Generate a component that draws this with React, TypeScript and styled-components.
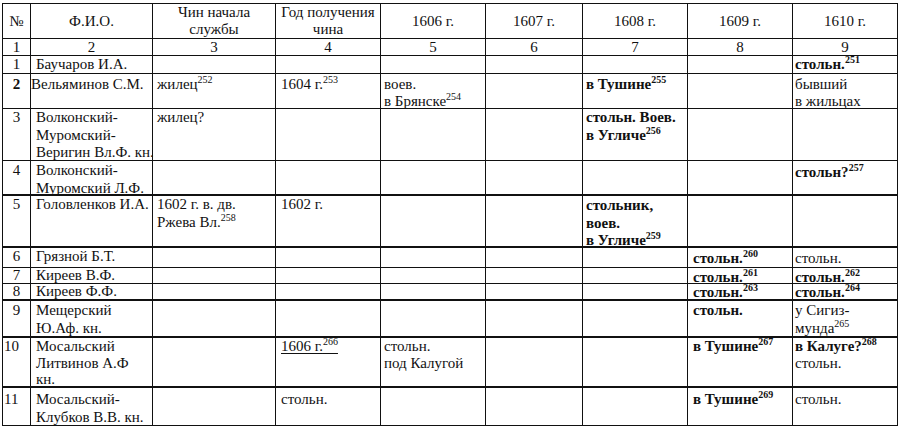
import React from 'react';
import styled, { createGlobalStyle } from 'styled-components';

const Global = createGlobalStyle`
  html, body { margin: 0; padding: 0; background: #fff; }
  body { font-family: 'Liberation Serif', 'Times New Roman', Times, serif; color: #000; }
`;

const COLS = [28, 122, 123, 105, 105, 97, 105, 105, 105];
const PL = [0, 5, 4, 5, 3, 3, 3, 5, 2];

type Spec = { t: React.ReactNode; b?: boolean; u?: boolean; dy?: number; pl?: number; align?: 'left' | 'center' };
type CellSpec = React.ReactNode | Spec;

type RowSpec = { h: number; pt: number; lh?: number; thick?: boolean; head?: boolean; center?: boolean; cells: CellSpec[] };

const Table = styled.div<{ $cols: string; $rows: string }>`
  display: grid;
  grid-template-columns: ${(p) => p.$cols};
  grid-template-rows: ${(p) => p.$rows};
  width: max-content;
  margin: 3px 0 0 2px;
  border-top: 1px solid #111;
  border-left: 1px solid #111;
  font-family: 'Liberation Serif', 'Times New Roman', Times, serif;
  color: #111;
`;

const Cell = styled.div<{ $pl: number; $thick?: boolean; $head?: boolean; $center?: boolean; $pt: number; $lh: number }>`
  box-sizing: border-box;
  min-height: 0;
  border-right: 1px solid #111;
  border-bottom: ${(p) => (p.$thick ? 2 : 1)}px solid #111;
  display: flex;
  flex-direction: column;
  justify-content: ${(p) => (p.$head ? 'center' : 'flex-start')};
  align-items: ${(p) => (p.$center ? 'center' : 'flex-start')};
  text-align: ${(p) => (p.$center ? 'center' : 'left')};
  padding-left: ${(p) => (p.$center ? 0 : p.$pl)}px;
  padding-top: ${(p) => (p.$head ? 0 : Math.max(p.$pt, 0))}px;
  font-size: 15px;
  line-height: ${(p) => p.$lh}px;
  white-space: nowrap;
`;

const Text = styled.div<{ $dy: number; $bold?: boolean; $u?: boolean }>`
  margin-top: ${(p) => p.$dy}px;
  flex: none;
  font-weight: ${(p) => (p.$bold ? 700 : 400)};
  text-decoration: ${(p) => (p.$u ? 'underline' : 'none')};
  text-decoration-thickness: 1px;
  text-underline-offset: 2px;
`;

const Sup = styled.sup`
  font-size: 10px;
  line-height: 0;
  vertical-align: 6px;
`;

const Plain = styled.span`
  font-weight: 400;
`;

const s = (n: number) => <Sup>{n}</Sup>;

const E = '';

const rows: RowSpec[] = [
  {
    h: 35, pt: 0, head: true, center: true, lh: 17,
    cells: ['№', 'Ф.И.О.', <>Чин начала<br />службы</>, <>Год получения<br />чина</>, '1606 г.', '1607 г.', '1608 г.', '1609 г.', '1610 г.'],
  },
  { h: 17, pt: 0, lh: 16, center: true, cells: ['1', '2', '3', '4', '5', '6', '7', '8', '9'] },
  {
    h: 18, pt: 0, lh: 17,
    cells: [{ t: '1', align: 'center' }, 'Баучаров И.А.', E, E, E, E, E, E, { t: <>стольн.{s(251)}</>, b: true }],
  },
  {
    h: 35, pt: 2, lh: 16.5,
    cells: [
      { t: '2', align: 'center', b: true },
      { t: 'Вельяминов С.М.', pl: 0 },
      <>жилец{s(252)}</>,
      <>1604 г.{s(253)}</>,
      <>воев.<br />в Брянске{s(254)}</>,
      E,
      { t: <>в Тушине{s(255)}</>, b: true },
      E,
      <>бывший<br />в жильцах</>,
    ],
  },
  {
    h: 52, pt: 0,
    cells: [
      { t: '3', align: 'center' },
      <>Волконский-<br />Муромский-<br />Веригин Вл.Ф. кн.</>,
      'жилец?', E, E, E,
      { t: <>стольн. Воев.<br />в Угличе{s(256)}</>, b: true },
      E, E,
    ],
  },
  {
    h: 35, pt: 1, thick: true,
    cells: [
      { t: '4', align: 'center' },
      <>Волконский-<br />Муромский Л.Ф.</>,
      E, E, E, E, E, E,
      { t: <>стольн?{s(257)}</>, b: true, dy: 2 },
    ],
  },
  {
    h: 52, pt: 0, thick: true,
    cells: [
      { t: '5', align: 'center' },
      'Головленков И.А.',
      <>1602 г. в. дв.<br />Ржева Вл.{s(258)}</>,
      '1602 г.', E, E,
      { t: <>стольник,<br />воев.<br />в Угличе{s(259)}</>, b: true, dy: 1 },
      E, E,
    ],
  },
  {
    h: 20, pt: 0, lh: 17,
    cells: [{ t: '6', align: 'center' }, 'Грязной Б.Т.', E, E, E, E, E, { t: <>стольн.{s(260)}</>, b: true, dy: 2 }, { t: 'стольн.', dy: 2 }],
  },
  {
    h: 16, pt: 0, lh: 14,
    cells: [{ t: '7', align: 'center' }, 'Киреев В.Ф.', E, E, E, E, E, { t: <>стольн.{s(261)}</>, b: true, dy: 2 }, { t: <>стольн.{s(262)}</>, b: true, dy: 2 }],
  },
  {
    h: 17, pt: 0, lh: 15, thick: true,
    cells: [{ t: '8', align: 'center' }, 'Киреев Ф.Ф.', E, E, E, E, E, { t: <>стольн.{s(263)}</>, b: true, dy: 1 }, { t: <>стольн.{s(264)}</>, b: true, dy: 1 }],
  },
  {
    h: 37, pt: 1, thick: true,
    cells: [{ t: '9', align: 'center' }, <>Мещерский<br />Ю.Аф. кн.</>, E, E, E, E, E, { t: 'стольн.', b: true }, <>у Сигиз-<br />мунда{s(265)}</>],
  },
  {
    h: 50, pt: 0, lh: 16.5, thick: true,
    cells: [
      { t: '10', pl: 1 },
      <>Мосальский<br />Литвинов А.Ф<br />кн.</>,
      E,
      { t: <>1606 г.{s(266)}</>, u: true },
      <>стольн.<br />под Калугой</>,
      E, E,
      { t: <>в Тушине{s(267)}</>, b: true },
      { t: <>в Калуге?{s(268)}<br /><Plain>стольн.</Plain></>, b: true },
    ],
  },
  {
    h: 38, pt: 3,
    cells: [
      { t: '11', pl: 1 },
      <>Мосальский-<br />Клубков В.В. кн.</>,
      E, 'стольн.', E, E, E,
      { t: <>в Тушине{s(269)}</>, b: true },
      'стольн.',
    ],
  },
];

const isSpec = (c: CellSpec): c is Spec =>
  typeof c === 'object' && c !== null && !React.isValidElement(c) && 't' in (c as object);

export default function App() {
  const colTpl = COLS.map((w) => `${w}px`).join(' ');
  const rowTpl = rows.map((r) => `${r.h}px`).join(' ');
  return (
    <>
      <Global />
      <Table $cols={colTpl} $rows={rowTpl}>
        {rows.map((row, ri) =>
          row.cells.map((c, ci) => {
            const spec: Spec = isSpec(c) ? c : { t: c as React.ReactNode };
            const center = row.center || spec.align === 'center';
            const dy = (row.pt < 0 ? row.pt : 0) + (spec.dy ?? 0);
            return (
              <Cell
                key={`${ri}-${ci}`}
                $pl={spec.pl ?? PL[ci]}
                $thick={row.thick}
                $head={row.head}
                $center={center}
                $pt={row.pt}
                $lh={row.lh ?? 17.5}
              >
                <Text $dy={dy} $bold={spec.b} $u={spec.u}>
                  {spec.t}
                </Text>
              </Cell>
            );
          })
        )}
      </Table>
    </>
  );
}
